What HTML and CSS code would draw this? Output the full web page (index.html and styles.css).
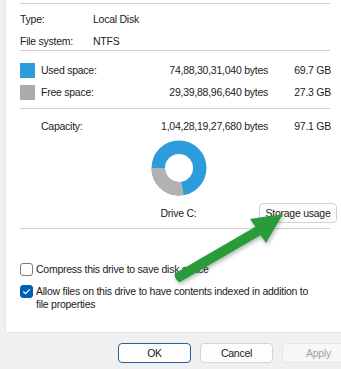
FILE: index.html
```html
<!DOCTYPE html>
<html>
<head>
<meta charset="utf-8">
<link rel="stylesheet" href="styles.css">
</head>
<body>
<div class="panel">
  <div class="sep first"></div>
  <div class="info">
    <div class="info-row"><span class="k">Type:</span><span>Local Disk</span></div>
    <div class="info-row"><span class="k">File system:</span><span>NTFS</span></div>
  </div>
  <div class="sep"></div>
  <div class="stats">
    <span class="sq used"></span><span>Used space:</span><span class="r">74,88,30,31,040 bytes</span><span class="r">69.7 GB</span>
    <span class="sq free"></span><span>Free space:</span><span class="r">29,39,88,96,640 bytes</span><span class="r">27.3 GB</span>
  </div>
  <div class="sep sep3"></div>
  <div class="stats cap">
    <span></span><span>Capacity:</span><span class="r">1,04,28,19,27,680 bytes</span><span class="r">97.1 GB</span>
  </div>
  <div class="donut-row">
    <svg width="56" height="56" viewBox="0 0 56 56">
      <circle cx="28" cy="28" r="20.75" fill="none" stroke="#2c9cdc" stroke-width="13.5"/>
      <path d="M 31.6 48.43 A 20.75 20.75 0 0 1 7.25 28" fill="none" stroke="#b2b2b2" stroke-width="13.5"/>
    </svg>
  </div>
  <div class="drive-row">
    <span></span>
    <span class="drive">Drive C:</span>
    <button class="btn storage">Storage usage</button>
  </div>
  <div class="sep sep4"></div>
  <div class="checks">
    <label class="check"><span class="box"></span><span class="ctext">Compress this drive to save disk space</span></label>
    <label class="check"><span class="box on"><svg width="13" height="13" viewBox="0 0 13 13"><path d="M3.6 6.8 L5.6 8.7 L9.5 4.6" fill="none" stroke="#fff" stroke-width="1.2" stroke-linecap="round" stroke-linejoin="round"/></svg></span><span class="ctext">Allow files on this drive to have contents indexed in addition to file properties</span></label>
  </div>
</div>
<div class="footer">
  <button class="btn ok">OK</button>
  <button class="btn">Cancel</button>
  <button class="btn disabled">Apply</button>
</div>
<svg class="arrow" width="341" height="369" viewBox="0 0 341 369">
  <defs>
    <filter id="sh" x="-20%" y="-20%" width="140%" height="140%">
      <feDropShadow dx="1" dy="2" stdDeviation="2" flood-color="#000" flood-opacity="0.3"/>
    </filter>
  </defs>
  <path d="M174.4 273.7 L255.4 226.7 L250 219 L283 214 L266 243 L260.6 235.3 L179.6 282.3 Q175 280 174.4 273.7 Z" fill="#2a9b3b" filter="url(#sh)"/>
</svg>
</body>
</html>
```
FILE: styles.css
```css
* { box-sizing: border-box; }
html, body { margin: 0; padding: 0; }
body {
  width: 341px;
  height: 369px;
  overflow: hidden;
  background: #f0f0f0;
  font-family: "Liberation Sans", Arial, sans-serif;
  font-size: 10.5px;
  letter-spacing: -0.25px;
  color: #1b1b1b;
  position: relative;
}
.panel {
  margin-left: 5px;
  height: 333px;
  background: #fff;
  border-left: 1px solid #e6e6e6;
  border-bottom: 1px solid #e2e2e2;
  padding: 3px 10px 0 14px;
}
.sep {
  height: 1px;
  background: #cfcfcf;
  margin-right: 1px;
}
.info {
  display: flex;
  flex-direction: column;
  gap: 4px;
  margin-top: 6px;
}
.info-row {
  height: 18px;
  display: flex;
  align-items: center;
}
.info-row .k { width: 73px; }
.stats {
  display: grid;
  grid-template-columns: 21px 1fr auto 63px;
  grid-auto-rows: 18px;
  row-gap: 4px;
  align-items: center;
  margin-top: 10px;
}
.stats .r { text-align: right; }
.sq { width: 15px; height: 15px; display: block; }
.sq.used { background: #2c9cdc; }
.sq.free { background: #ababab; }
.sep3 { margin-top: 7px; }
.stats.cap { margin-top: 8px; }
.donut-row {
  display: flex;
  justify-content: center;
  padding-left: 6px;
  margin-top: 5px;
  height: 56px;
}
.donut-row svg { display: block; }
.drive-row {
  display: grid;
  grid-template-columns: 1fr auto 1fr;
  align-items: center;
  padding-left: 6px;
  margin-top: 7px;
  height: 20px;
}
.drive { text-align: center; }
.btn {
  font-family: "Liberation Sans", Arial, sans-serif;
  font-size: 10.5px;
  letter-spacing: -0.25px;
  color: #1b1b1b;
  background: #fdfdfd;
  border: 1px solid #d3d3d3;
  border-radius: 4px;
  height: 20px;
  padding: 0;
  margin: 0;
}
.storage {
  justify-self: end;
  width: 78px;
  margin-right: -6px;
}
.sep4 { margin-top: 5px; }
.checks {
  margin-top: 34px;
  display: flex;
  flex-direction: column;
  gap: 9px;
}
.check {
  display: flex;
  align-items: flex-start;
  gap: 3px;
  line-height: 13px;
}
.box {
  width: 13px;
  height: 13px;
  flex: none;
  border: 1px solid #7c7c7c;
  border-radius: 3px;
  background: #fff;
  display: block;
}
.box.on {
  background: #005fb8;
  border-color: #005fb8;
  position: relative;
}
.box.on svg { position: absolute; left: -1px; top: -1px; }
.ctext { width: 280px; }
.footer {
  display: flex;
  gap: 9px;
  padding: 10px 0 0 118px;
  overflow: hidden;
}
.footer .btn { width: 73px; flex: none; }
.footer .ok { border-color: #1f63a0; }
.footer .disabled {
  background: #f7f7f7;
  border-color: #e5e5e5;
  color: #a2a2a2;
}
.arrow {
  position: absolute;
  left: 0;
  top: 0;
  pointer-events: none;
}
```
